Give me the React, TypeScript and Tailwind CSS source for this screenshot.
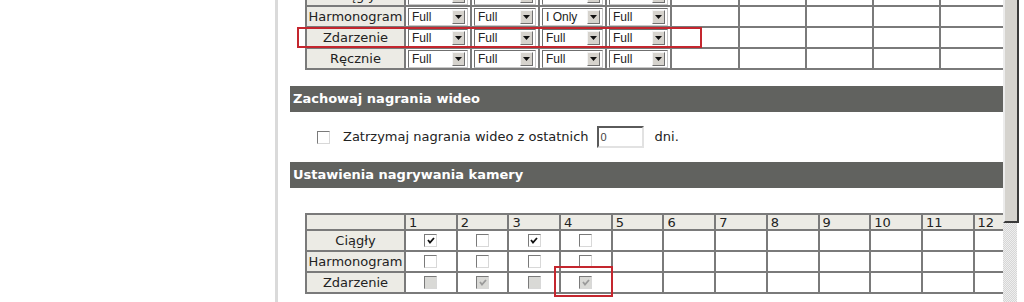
import React from "react";

const font = { fontFamily: "'DejaVu Sans', Verdana, sans-serif" };

function Select({ value }: { value: string }) {
  return (
    <div className="mx-[2px] flex h-[18px] items-center border border-t-[#6f6f6f] border-l-[#6f6f6f] border-r-[#c8c8c8] border-b-[#c8c8c8] bg-white">
      <span className="flex-1 pl-[3px] text-[12px] leading-none text-[#222]" style={{ fontFamily: "'Liberation Sans', Arial, sans-serif" }}>
        {value}
      </span>
      <span className="mr-[2px] flex h-[14px] w-[13px] items-center justify-center border border-t-[#f4f4f4] border-l-[#f4f4f4] border-r-[#707070] border-b-[#707070] bg-[#d6d3cd]">
        <svg width="7" height="4" viewBox="0 0 7 4">
          <path d="M0 0h7L3.5 4z" fill="#111" />
        </svg>
      </span>
    </div>
  );
}

function Box({ checked = false, disabled = false }: { checked?: boolean; disabled?: boolean }) {
  return (
    <span
      className={`inline-flex h-[13px] w-[13px] items-center justify-center border border-t-[#7a7a7a] border-l-[#7a7a7a] border-r-[#d8d8d8] border-b-[#d8d8d8] ${
        disabled ? "bg-[#d9d9d6]" : "bg-white"
      }`}
    >
      {checked && (
        <svg width="8" height="7" viewBox="0 0 8 7">
          <path d="M1 3l2 2.5L7 1" stroke={disabled ? "#9a9a9a" : "#111"} strokeWidth="1.8" fill="none" />
        </svg>
      )}
    </span>
  );
}

const modeRows = [
  { label: "Ciągły", vals: ["Full", "Full", "Full", "Full"] },
  { label: "Harmonogram", vals: ["Full", "Full", "I Only", "Full"] },
  { label: "Zdarzenie", vals: ["Full", "Full", "Full", "Full"] },
  { label: "Ręcznie", vals: ["Full", "Full", "Full", "Full"] },
];

const camRows: { label: string; cells: { c: boolean; d: boolean }[] }[] = [
  { label: "Ciągły", cells: [{ c: true, d: false }, { c: false, d: false }, { c: true, d: false }, { c: false, d: false }] },
  { label: "Harmonogram", cells: [{ c: false, d: false }, { c: false, d: false }, { c: false, d: false }, { c: false, d: false }] },
  { label: "Zdarzenie", cells: [{ c: false, d: true }, { c: true, d: true }, { c: false, d: true }, { c: true, d: true }] },
];

const cols = ["1", "2", "3", "4", "5", "6", "7", "8", "9", "10", "11", "12"];

export default function App() {
  return (
    <div className="flex h-[302px] w-[1024px] overflow-hidden bg-white text-[13px] text-[#222]" style={font}>
      <div className="w-[275px] shrink-0 bg-white" />
      <div className="w-[3px] shrink-0 bg-[#dadada]" />

      <main className="relative w-[725px] shrink-0 overflow-hidden pl-[12px]">
        {/* recording modes */}
        <div className="ml-[15px] mt-[-16px] grid w-[760px] grid-cols-[99px_66px_68px_67px_65px_68px_67px_67px_67px_67px] border-l-2 border-t-2 border-[#7a7a7a]">
          {modeRows.map((r) => (
            <React.Fragment key={r.label}>
              <div className="flex h-[21px] items-center justify-center border-b-2 border-r-2 border-[#7a7a7a] bg-[#ecebe5]">
                {r.label}
              </div>
              {r.vals.map((v, i) => (
                <div key={i} className="flex h-[21px] items-center border-b-2 border-r-2 border-[#7a7a7a]">
                  <div className="w-full">
                    <Select value={v} />
                  </div>
                </div>
              ))}
              {[0, 1, 2, 3, 4].map((i) => (
                <div key={i} className="h-[21px] border-b-2 border-r-2 border-[#7a7a7a]" />
              ))}
            </React.Fragment>
          ))}
        </div>

        <div className="mt-[16px] flex h-[26px] items-center bg-[#61625f] pl-[3px] font-bold text-white">
          Zachowaj nagrania wideo
        </div>

        <div className="flex h-[50px] items-center pl-[27px]">
          <Box />
          <span className="ml-[13px]">Zatrzymaj nagrania wideo z ostatnich</span>
          <span className="ml-[8px] flex h-[22px] w-[47px] items-center border-2 border-t-[#5a5a5a] border-l-[#5a5a5a] border-r-[#e2e2e2] border-b-[#e2e2e2] pl-[2px] text-[11px] text-[#444]" style={{ fontFamily: "'Liberation Sans', Arial, sans-serif" }}>
            0
          </span>
          <span className="ml-[11px]">dni.</span>
        </div>

        <div className="flex h-[26px] items-center bg-[#61625f] pl-[3px] font-bold text-white">
          Ustawienia nagrywania kamery
        </div>

        {/* camera recording */}
        <div className="ml-[15px] mt-[25px] grid w-[740px] grid-cols-[99px_repeat(12,51.7px)] border-l-2 border-t-2 border-[#7a7a7a]">
          <div className="h-[16px] border-b-2 border-r-2 border-[#7a7a7a] bg-[#ecebe5]" />
          {cols.map((c) => (
            <div key={c} className="flex h-[16px] items-center border-b-2 border-r-2 border-[#7a7a7a] bg-[#ecebe5] pl-[3px] leading-none">
              {c}
            </div>
          ))}
          {camRows.map((r) => (
            <React.Fragment key={r.label}>
              <div className="flex h-[21px] items-center justify-center border-b-2 border-r-2 border-[#7a7a7a] bg-[#ecebe5]">
                {r.label}
              </div>
              {cols.map((c, i) => (
                <div key={c} className="flex h-[21px] items-center justify-center border-b-2 border-r-2 border-[#7a7a7a]">
                  {r.cells[i] && <Box checked={r.cells[i].c} disabled={r.cells[i].d} />}
                </div>
              ))}
            </React.Fragment>
          ))}
        </div>

        {/* annotations */}
        <div className="absolute left-[19px] top-[27px] h-[21px] w-[405px] border-2 border-[#c4262e]" />
        <div className="absolute left-[276px] top-[266px] h-[31px] w-[59px] border-2 border-[#c4262e]" />
      </main>

      <div className="flex w-[21px] shrink-0 flex-col">
        <div className="flex h-[223px]">
          <div className="w-[16px] border-b-2 border-l-2 border-r-2 border-b-[#3a3a3a] border-l-[#ececec] border-r-[#3a3a3a] bg-[#d5d3ce]" />
          <div className="flex-1 bg-white" />
        </div>
        <div className="flex flex-1">
          <div className="w-[14px] bg-[repeating-conic-gradient(#d6d6d6_0_25%,#eeeeee_0_50%)] bg-[length:2px_2px]" />
          <div className="flex-1 bg-white" />
        </div>
      </div>
    </div>
  );
}
